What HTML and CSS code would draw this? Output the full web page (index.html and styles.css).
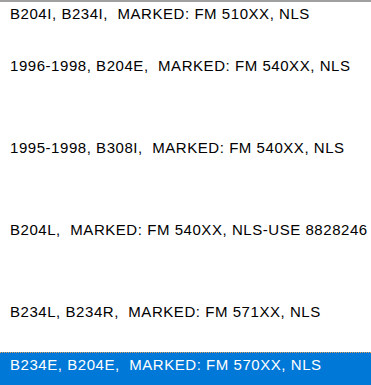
FILE: index.html
```html
<!DOCTYPE html>
<html lang="en">
<head>
<meta charset="UTF-8" />
<meta name="viewport" content="width=device-width, initial-scale=1" />
<title>Model List</title>
<link rel="stylesheet" href="styles.css">
</head>
<body>
  <ul class="listbox" role="listbox" aria-label="Models">
    <li class="item short first" role="option">B204I, B234I,  MARKED: FM 510XX, NLS</li>
    <li class="item tall" role="option">1996-1998, B204E,  MARKED: FM 540XX, NLS</li>
    <li class="item tall" role="option">1995-1998, B308I,  MARKED: FM 540XX, NLS</li>
    <li class="item tall" role="option">B204L,  MARKED: FM 540XX, NLS-USE 8828246</li>
    <li class="item short" role="option">B234L, B234R,  MARKED: FM 571XX, NLS</li>
    <li class="item selected" role="option" aria-selected="true">B234E, B204E,  MARKED: FM 570XX, NLS</li>
  </ul>
</body>
</html>
```

FILE: styles.css
```css
:root {
  --list-bg: #ffffff;
  --list-border: #a0a0a0;
  --text: #000000;
  --select-bg: #0078d7;
  --select-text: #ffffff;
  --focus-dots: #e8a060;
}
*, *::before, *::after {
  box-sizing: border-box;
}
html, body {
  margin: 0;
  height: 100%;
  background: var(--list-bg);
}
body {
  font-family: "Liberation Sans", Arial, sans-serif;
  font-size: 15px;
  letter-spacing: 0.55px;
  color: var(--text);
  overflow: hidden;
}
.listbox {
  list-style: none;
  margin: 0;
  padding: 0;
  height: 100%;
  border-top: 2px solid var(--list-border);
  display: flex;
  flex-direction: column;
}
.item {
  line-height: 16px;
  padding: 5px 0 0 10px;
  white-space: pre;
  flex: none;
}
.item.first {
  height: 51px;
  padding-top: 4px;
}
.item.short {
  height: 53px;
}
.item.first.short {
  height: 51px;
}
.item.tall {
  height: 82px;
}
.item.selected {
  flex: 1;
  background: var(--select-bg);
  color: var(--select-text);
  border-top: 1px dotted var(--focus-dots);
  padding-top: 4px;
}
```
